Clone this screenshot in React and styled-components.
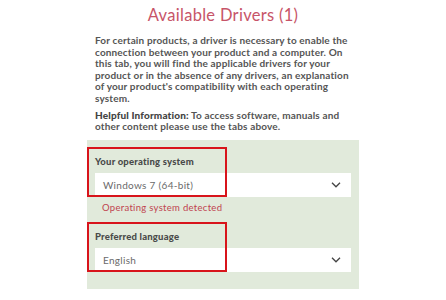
import React from "react";
import styled, { createGlobalStyle } from "styled-components";

const fields = [
  {
    label: "Your operating system",
    value: "Windows 7 (64-bit)",
    note: "Operating system detected",
  },
  { label: "Preferred language", value: "English" },
];

const Chevron = () => (
  <svg width="10" height="6" viewBox="0 0 10 6" fill="none">
    <path d="M1 0.8l4 4 4-4" stroke="#444" strokeWidth="1.3" />
  </svg>
);

const App = () => {
  return (
    <>
      <GlobalStyle />
      <S.Page>
        <S.Title>Available Drivers (1)</S.Title>
        <S.Text>
          For certain products, a driver is necessary to enable the connection
          between your product and a computer. On this tab, you will find the
          applicable drivers for your product or in the absence of any drivers,
          an explanation of your product's compatibility with each operating
          system.
        </S.Text>
        <S.Text gap={5}>
          <strong>Helpful Information:</strong> To access software, manuals and
          other content please use the tabs above.
        </S.Text>
        <S.Panel>
          {fields.map((f) => (
            <S.Field key={f.label}>
              <S.Highlight />
              <S.Label>{f.label}</S.Label>
              <S.Select>
                <span>{f.value}</span>
                <Chevron />
              </S.Select>
              {f.note && <S.Note>{f.note}</S.Note>}
            </S.Field>
          ))}
        </S.Panel>
      </S.Page>
    </>
  );
};

const GlobalStyle = createGlobalStyle`
  body {
    margin: 0;
    background: #fff;
    font-family: "Lato", "Liberation Sans", sans-serif;
  }
`;

const S = {};

S.Page = styled.div`
  width: 272px;
  margin: 0 auto;
  padding-top: 5px;
`;

S.Title = styled.h1`
  margin: 0 0 10px;
  font-weight: 400;
  font-size: 16.5px;
  line-height: 20px;
  color: #c75468;
  text-align: center;
  letter-spacing: 0.3px;
`;

S.Text = styled.p`
  margin: ${(p) => p.gap || 0}px 8px 0;
  font-size: 10px;
  line-height: 11.6px;
  font-weight: 700;
  letter-spacing: 0.15px;
  color: #555;

  strong {
    font-weight: 900;
    color: #444;
  }
`;

S.Panel = styled.div`
  margin-top: 7px;
  background: #e1eadb;
  padding: 16px 8px 17px;
  display: flex;
  flex-direction: column;
  gap: 17px;
`;

S.Field = styled.div`
  position: relative;
  display: flex;
  flex-direction: column;
`;

S.Highlight = styled.div`
  position: absolute;
  left: -8px;
  top: -9px;
  width: 140px;
  height: 50px;
  border: 2px solid #d8141b;
  box-sizing: border-box;
  pointer-events: none;
`;

S.Label = styled.div`
  font-size: 9.5px;
  line-height: 12px;
  font-weight: 900;
  letter-spacing: 0.2px;
  color: #4a4a4a;
  margin-bottom: 5px;
`;

S.Select = styled.div`
  height: 24px;
  background: #fff;
  display: flex;
  align-items: center;
  justify-content: space-between;
  padding: 0 10px 0 8px;
  font-size: 10px;
  letter-spacing: 0.3px;
  color: #6a6a6a;
`;

S.Note = styled.div`
  margin-top: 5px;
  padding-left: 7px;
  font-size: 9.5px;
  line-height: 12px;
  letter-spacing: 0.3px;
  color: #c0444f;
`;

export default App;
